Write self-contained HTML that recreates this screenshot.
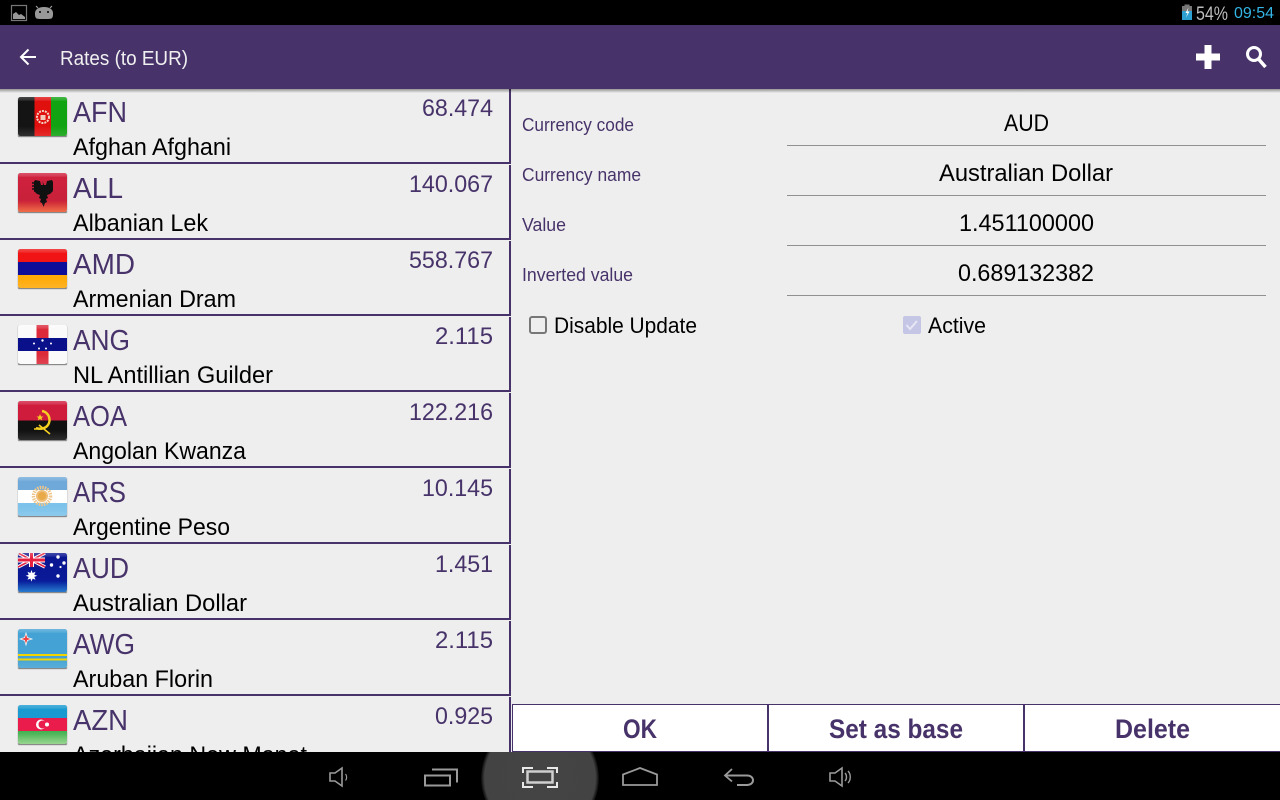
<!DOCTYPE html>
<html>
<head>
<meta charset="utf-8">
<style>
html,body{margin:0;padding:0;width:1280px;height:800px;overflow:hidden;background:#eee}
svg{display:block}
text{font-family:"Liberation Sans",sans-serif}
.code{font-size:29px;fill:#47336a}
.name{font-size:24px;fill:#000}
.val{font-size:24px;fill:#47336a;text-anchor:end}
.lab{font-size:18px;fill:#47336a}
.fv{font-size:24px;fill:#000}
.btn{font-size:27px;font-weight:bold;fill:#47336a}
</style>
</head>
<body>
<svg width="1280" height="800" viewBox="0 0 1280 800" xmlns="http://www.w3.org/2000/svg">
<defs>
<clipPath id="fc"><rect width="49" height="39" rx="2.5"/></clipPath>
<linearGradient id="gloss" x1="0" y1="0" x2="0" y2="1">
<stop offset="0" stop-color="#fff" stop-opacity=".22"/>
<stop offset=".09" stop-color="#fff" stop-opacity=".1"/>
<stop offset=".1" stop-color="#fff" stop-opacity="0"/>
<stop offset=".75" stop-color="#fff" stop-opacity="0"/>
<stop offset="1" stop-color="#fff" stop-opacity=".12"/>
</linearGradient>
<linearGradient id="shadow" x1="0" y1="0" x2="0" y2="1">
<stop offset="0" stop-color="#000" stop-opacity=".38"/>
<stop offset="1" stop-color="#000" stop-opacity="0"/>
</linearGradient>
<linearGradient id="albg" x1="0" y1="0" x2="0" y2="1">
<stop offset="0" stop-color="#d0213f"/><stop offset=".7" stop-color="#c9213a"/><stop offset="1" stop-color="#ee5a30"/>
</linearGradient>
<linearGradient id="augr" x1="0" y1="0" x2="0" y2="1">
<stop offset="0" stop-color="#0a1590"/><stop offset=".7" stop-color="#0a1a98"/><stop offset="1" stop-color="#0a68c8"/>
</linearGradient>
<linearGradient id="azgr" x1="0" y1="0" x2="0" y2="1">
<stop offset="0" stop-color="#3fb050"/><stop offset="1" stop-color="#8ad080"/>
</linearGradient>
<radialGradient id="halo" cx=".5" cy=".5" r=".5">
<stop offset="0" stop-color="#444"/><stop offset=".94" stop-color="#434343"/><stop offset="1" stop-color="#0a0a0a"/>
</radialGradient>
<g id="frame">
<rect x="-1" y="0" width="51" height="41" rx="3" fill="#000" opacity=".08"/>
<rect y="38" width="49" height="2" rx="1" fill="#666" opacity=".7"/>
</g>
</defs>

<rect width="1280" height="800" fill="#eee"/>

<!-- list rows separators -->
<g fill="#47336a">
<rect x="0" y="162" width="510" height="2"/>
<rect x="0" y="238" width="510" height="2"/>
<rect x="0" y="314" width="510" height="2"/>
<rect x="0" y="390" width="510" height="2"/>
<rect x="0" y="466" width="510" height="2"/>
<rect x="0" y="542" width="510" height="2"/>
<rect x="0" y="618" width="510" height="2"/>
<rect x="0" y="694" width="510" height="2"/>
<rect x="509" y="89" width="2" height="75"/>
<rect x="509" y="165" width="2" height="75"/>
<rect x="509" y="241" width="2" height="75"/>
<rect x="509" y="317" width="2" height="75"/>
<rect x="509" y="393" width="2" height="75"/>
<rect x="509" y="469" width="2" height="75"/>
<rect x="509" y="545" width="2" height="75"/>
<rect x="509" y="621" width="2" height="75"/>
<rect x="509" y="697" width="2" height="56"/>
</g>

<!-- Flags -->
<g transform="translate(18,97)"><use href="#frame"/><g clip-path="url(#fc)">
<rect width="16.500" height="39" fill="#141414"/><rect x="16.500" width="16.500" height="39" fill="#e0100f"/><rect x="33" width="16" height="39" fill="#12a312"/>
<circle cx="25" cy="20" r="6" fill="none" stroke="#f5d5c5" stroke-width="2" stroke-dasharray="2 1"/>
<rect x="22.500" y="18" width="5" height="5" fill="#f2c8b8"/>
<rect width="49" height="39" fill="url(#gloss)"/></g></g>

<g transform="translate(18,173)"><use href="#frame"/><g clip-path="url(#fc)">
<rect width="49" height="39" fill="url(#albg)"/>
<path d="M24.500 8l1.500 4 2 0 1-4 5-1 1 2 0 9-3 3-3 1 1 3-2 1 1 3-2 1-1.500 4-1.500-4-2-1 1-3-2-1 1-3-3-1-3-3 0-9 1-2 5 1 1 4 2 0z" fill="#111"/>
<path d="M15 9v9M17 8v12M32 8v12M34 9v9" stroke="#111" stroke-width="1.500" stroke-dasharray="2 1" fill="none"/>
<rect width="49" height="39" fill="url(#gloss)"/></g></g>

<g transform="translate(18,249)"><use href="#frame"/><g clip-path="url(#fc)">
<rect width="49" height="13" fill="#f01414"/><rect y="13" width="49" height="13" fill="#0d0d9a"/><rect y="26" width="49" height="13" fill="#ffaa08"/>
<rect width="49" height="39" fill="url(#gloss)"/></g></g>

<g transform="translate(18,325)"><use href="#frame"/><g clip-path="url(#fc)">
<rect width="49" height="39" fill="#fafafa"/>
<rect x="18.500" width="12" height="39" fill="#dc2a3a"/>
<rect y="13" width="49" height="13" fill="#0a0f8a"/>
<g fill="#fff"><circle cx="24.500" cy="15.500" r="1.200"/><circle cx="16" cy="18.500" r="1"/><circle cx="33" cy="18.500" r="1"/><circle cx="21" cy="23.500" r="1"/><circle cx="28" cy="23.500" r="1"/></g>
<rect width="49" height="39" fill="url(#gloss)"/></g></g>

<g transform="translate(18,401)"><use href="#frame"/><g clip-path="url(#fc)">
<rect width="49" height="19.500" fill="#d01c3c"/><rect y="19.500" width="49" height="19.500" fill="#111"/>
<path d="M24 10a9 9 0 0 1 4 16c-3 2-7 2-10 1" fill="none" stroke="#f5d020" stroke-width="2.500"/>
<path d="M21 24l11 9M16 28h6" stroke="#f5d020" stroke-width="1.600" fill="none"/>
<path d="M22 13l1 2.500 2.500 0-2 1.500.8 2.500-2.300-1.500-2.300 1.500.8-2.500-2-1.500 2.500 0z" fill="#f5d020"/>
<rect width="49" height="39" fill="url(#gloss)"/></g></g>

<g transform="translate(18,477)"><use href="#frame"/><g clip-path="url(#fc)">
<rect width="49" height="13" fill="#6fa9d9"/><rect y="13" width="49" height="13" fill="#fff"/><rect y="26" width="49" height="13" fill="#7cc2ea"/>
<circle cx="24" cy="19" r="8.500" fill="none" stroke="#eec58a" stroke-width="3.500" stroke-dasharray="1.500 1"/>
<circle cx="24" cy="19" r="6" fill="#eebd78"/><circle cx="24" cy="19" r="4" fill="#e8a948"/>
<rect width="49" height="39" fill="url(#gloss)"/></g></g>

<g transform="translate(18,553)"><use href="#frame"/><g clip-path="url(#fc)">
<rect width="49" height="39" fill="url(#augr)"/>
<rect width="27" height="14" fill="#1a1a8a"/>
<path d="M0 0l27 14M27 0L0 14" stroke="#fff" stroke-width="3.500"/>
<path d="M0 0l27 14M27 0L0 14" stroke="#e52040" stroke-width="1.600"/>
<path d="M13.500 0v14M0 7h27" stroke="#fff" stroke-width="5"/>
<path d="M13.500 0v14M0 7h27" stroke="#e52040" stroke-width="3"/>
<g fill="#fff"><path d="M13.500 17l1.100 3 2.900-1.200-1.200 2.900 3 1.100-3 1.100 1.200 2.900-2.900-1.200-1.100 3-1.100-3-2.900 1.200 1.200-2.900-3-1.100 3-1.100-1.200-2.900 2.900 1.200z"/>
<circle cx="40" cy="4" r="1.700"/><circle cx="33.500" cy="12" r="1.700"/><circle cx="46" cy="10" r="1.700"/><circle cx="42.500" cy="14" r="1.100"/><circle cx="40" cy="23" r="1.700"/></g>
<rect width="49" height="39" fill="url(#gloss)"/></g></g>

<g transform="translate(18,629)"><use href="#frame"/><g clip-path="url(#fc)">
<rect width="49" height="39" fill="#44a3d4"/>
<rect y="25" width="49" height="2" fill="#f2d400"/><rect y="29.500" width="49" height="2" fill="#f2d400"/>
<path d="M8 4l1.400 4.600L14 10l-4.600 1.400L8 16l-1.400-4.600L2 10l4.600-1.400z" fill="#f04040" stroke="#fff" stroke-width=".7"/>
<rect width="49" height="39" fill="url(#gloss)"/></g></g>

<g transform="translate(18,705)"><use href="#frame"/><g clip-path="url(#fc)">
<rect width="49" height="13" fill="#1a9ad0"/><rect y="13" width="49" height="13" fill="#ea1c4c"/><rect y="26" width="49" height="13" fill="url(#azgr)"/>
<circle cx="23" cy="19.500" r="5" fill="#fff"/><circle cx="24.500" cy="19.500" r="4" fill="#ea1c4c"/>
<circle cx="29" cy="19.500" r="2" fill="#fff"/>
<rect width="49" height="39" fill="url(#gloss)"/></g></g>

<!-- Row text -->
<text class="code" x="73" y="122" textLength="54" lengthAdjust="spacingAndGlyphs">AFN</text>
<text class="name" x="73" y="155" textLength="158" lengthAdjust="spacingAndGlyphs">Afghan Afghani</text>
<text class="val" x="493" y="116" textLength="71" lengthAdjust="spacingAndGlyphs">68.474</text>

<text class="code" x="73" y="198" textLength="50" lengthAdjust="spacingAndGlyphs">ALL</text>
<text class="name" x="73" y="231" textLength="135" lengthAdjust="spacingAndGlyphs">Albanian Lek</text>
<text class="val" x="493" y="192" textLength="84" lengthAdjust="spacingAndGlyphs">140.067</text>

<text class="code" x="73" y="274" textLength="62" lengthAdjust="spacingAndGlyphs">AMD</text>
<text class="name" x="73" y="307" textLength="163" lengthAdjust="spacingAndGlyphs">Armenian Dram</text>
<text class="val" x="493" y="268" textLength="84" lengthAdjust="spacingAndGlyphs">558.767</text>

<text class="code" x="73" y="350" textLength="57" lengthAdjust="spacingAndGlyphs">ANG</text>
<text class="name" x="73" y="383" textLength="200" lengthAdjust="spacingAndGlyphs">NL Antillian Guilder</text>
<text class="val" x="493" y="344" textLength="58" lengthAdjust="spacingAndGlyphs">2.115</text>

<text class="code" x="73" y="426" textLength="54" lengthAdjust="spacingAndGlyphs">AOA</text>
<text class="name" x="73" y="459" textLength="173" lengthAdjust="spacingAndGlyphs">Angolan Kwanza</text>
<text class="val" x="493" y="420" textLength="84" lengthAdjust="spacingAndGlyphs">122.216</text>

<text class="code" x="73" y="502" textLength="53" lengthAdjust="spacingAndGlyphs">ARS</text>
<text class="name" x="73" y="535" textLength="157" lengthAdjust="spacingAndGlyphs">Argentine Peso</text>
<text class="val" x="493" y="496" textLength="71" lengthAdjust="spacingAndGlyphs">10.145</text>

<text class="code" x="73" y="578" textLength="56" lengthAdjust="spacingAndGlyphs">AUD</text>
<text class="name" x="73" y="611" textLength="174" lengthAdjust="spacingAndGlyphs">Australian Dollar</text>
<text class="val" x="493" y="572" textLength="58" lengthAdjust="spacingAndGlyphs">1.451</text>

<text class="code" x="73" y="654" textLength="62" lengthAdjust="spacingAndGlyphs">AWG</text>
<text class="name" x="73" y="687" textLength="140" lengthAdjust="spacingAndGlyphs">Aruban Florin</text>
<text class="val" x="493" y="648" textLength="58" lengthAdjust="spacingAndGlyphs">2.115</text>

<text class="code" x="73" y="730" textLength="55" lengthAdjust="spacingAndGlyphs">AZN</text>
<text class="name" x="73" y="763" textLength="234" lengthAdjust="spacingAndGlyphs">Azerbaijan New Manat</text>
<text class="val" x="493" y="724" textLength="58" lengthAdjust="spacingAndGlyphs">0.925</text>

<!-- Detail panel -->
<text class="lab" x="522" y="131" textLength="112" lengthAdjust="spacingAndGlyphs">Currency code</text>
<text class="lab" x="522" y="181" textLength="119" lengthAdjust="spacingAndGlyphs">Currency name</text>
<text class="lab" x="522" y="231" textLength="44" lengthAdjust="spacingAndGlyphs">Value</text>
<text class="lab" x="522" y="281" textLength="111" lengthAdjust="spacingAndGlyphs">Inverted value</text>

<text class="fv" x="1004" y="131" textLength="45" lengthAdjust="spacingAndGlyphs">AUD</text>
<text class="fv" x="939" y="181" textLength="174" lengthAdjust="spacingAndGlyphs">Australian Dollar</text>
<text class="fv" x="959" y="231" textLength="135" lengthAdjust="spacingAndGlyphs">1.451100000</text>
<text class="fv" x="958" y="281" textLength="136" lengthAdjust="spacingAndGlyphs">0.689132382</text>

<g fill="#909090">
<rect x="787" y="145" width="479" height="1"/>
<rect x="787" y="195" width="479" height="1"/>
<rect x="787" y="245" width="479" height="1"/>
<rect x="787" y="295" width="479" height="1"/>
</g>

<!-- Checkboxes -->
<rect x="530" y="317" width="16" height="16" rx="2" fill="none" stroke="#777" stroke-width="2"/>
<text x="554" y="333" font-size="22" fill="#000" textLength="143" lengthAdjust="spacingAndGlyphs">Disable Update</text>
<rect x="903" y="316" width="18" height="18" rx="2" fill="#c5c5e6"/>
<path d="M906.500 325l3.500 4 7-8" fill="none" stroke="#e6e6f4" stroke-width="2"/>
<text x="928" y="333" font-size="22" fill="#000" textLength="58" lengthAdjust="spacingAndGlyphs">Active</text>

<!-- Buttons -->
<rect x="512" y="704" width="768" height="48" fill="#fff"/>
<g fill="#47336a">
<rect x="512" y="704" width="768" height="1"/>
<rect x="512" y="704" width="1" height="48"/>
<rect x="767" y="704" width="2" height="48"/>
<rect x="1023" y="704" width="2" height="48"/>
<rect x="512" y="751" width="768" height="1"/>
</g>
<text class="btn" x="623" y="738" textLength="34" lengthAdjust="spacingAndGlyphs">OK</text>
<text class="btn" x="829" y="738" textLength="134" lengthAdjust="spacingAndGlyphs">Set as base</text>
<text class="btn" x="1115" y="738" textLength="75" lengthAdjust="spacingAndGlyphs">Delete</text>

<!-- Action bar -->
<rect x="0" y="89" width="1280" height="4" fill="url(#shadow)"/>
<rect x="0" y="25" width="1280" height="64" fill="#47336a"/>
<path d="M36 57H22M28.500 49.500L21 57l7.500 7.500" fill="none" stroke="#fff" stroke-width="2"/>
<text x="60" y="65" font-size="20" fill="#f0f0f0" textLength="128" lengthAdjust="spacingAndGlyphs">Rates (to EUR)</text>
<path d="M1204.500 45h7v8.500h8.500v7h-8.500v8.500h-7v-8.500h-8.500v-7h8.500z" fill="#fff"/>
<circle cx="1254" cy="54" r="6.500" fill="none" stroke="#fff" stroke-width="3"/>
<path d="M1258.500 59l7 8" stroke="#fff" stroke-width="3.500" fill="none"/>

<!-- Status bar -->
<rect x="0" y="0" width="1280" height="25" fill="#000"/>
<rect x="11.500" y="5.500" width="15" height="15" fill="none" stroke="#777" stroke-width="1.200"/>
<path d="M13 19v-5l3-2 3 3 2-1 4 3v2z" fill="#999"/>
<path d="M36 18c-1-1-1-3-1-5 0-3 3-6 9-6s9 3 9 6c0 2 0 4-1 5-1 1-3 1-8 1s-7 0-8-1z" fill="#999"/>
<path d="M38 8l-2-2M50 8l2-2" stroke="#999" stroke-width="1.200"/>
<circle cx="40" cy="12" r="1" fill="#000"/><circle cx="48" cy="12" r="1" fill="#000"/>
<rect x="1184.500" y="4.500" width="5" height="2" fill="#777"/>
<rect x="1182" y="6" width="10" height="14" fill="#777"/>
<rect x="1182" y="11" width="10" height="9" fill="#2d9fd0"/>
<path d="M1188.500 7.500l-3 5.500h2l-1.500 4.500 3.500-6h-2z" fill="#fff"/>
<text x="1196" y="20" font-size="19" fill="#bdbdbd" textLength="32" lengthAdjust="spacingAndGlyphs">54%</text>
<text x="1234" y="18" font-size="16" fill="#33b5e5" textLength="40" lengthAdjust="spacingAndGlyphs">09:54</text>

<!-- Nav bar -->
<rect x="0" y="752" width="1280" height="48" fill="#000"/>
<svg x="0" y="752" width="1280" height="48" viewBox="0 752 1280 48">
<circle cx="540" cy="778" r="59" fill="url(#halo)"/>
</svg>
<g fill="none" stroke="#9a9a9a" stroke-width="1.600">
<path d="M330 773v8h5l7 5v-18l-7 5z"/>
<path d="M345.500 774c1.500 1.500 1.500 5 0 6.500" stroke-width="1.200"/>
<rect x="425" y="775.500" width="25" height="10" stroke-width="2"/>
<path d="M432 769.500h25v13" stroke-width="2"/>
<path d="M623 785V774.500l17-6.500 17 6.500V785z" stroke-width="1.800"/>
<path d="M725 775.500h22c8 0 8 9.500 0 9.500h-10" stroke-width="2"/>
<path d="M732 769l-7 6.500 7 6" stroke-width="1.800"/>
<path d="M830 773v8h5l7 5v-18l-7 5z"/>
<path d="M845 773c2 2 2 6 0 8M848 771c3 3 3 9 0 12" stroke-width="1.400"/>
</g>
<g fill="none" stroke="#e8e8e8" stroke-width="2">
<rect x="527.500" y="771.500" width="25" height="11" stroke="#cfcfcf" stroke-width="2.500"/>
<path d="M523 773v-5h10M547 768h10v5M523 782v5h10M547 787h10v-5"/>
</g>
</svg>
</body>
</html>
